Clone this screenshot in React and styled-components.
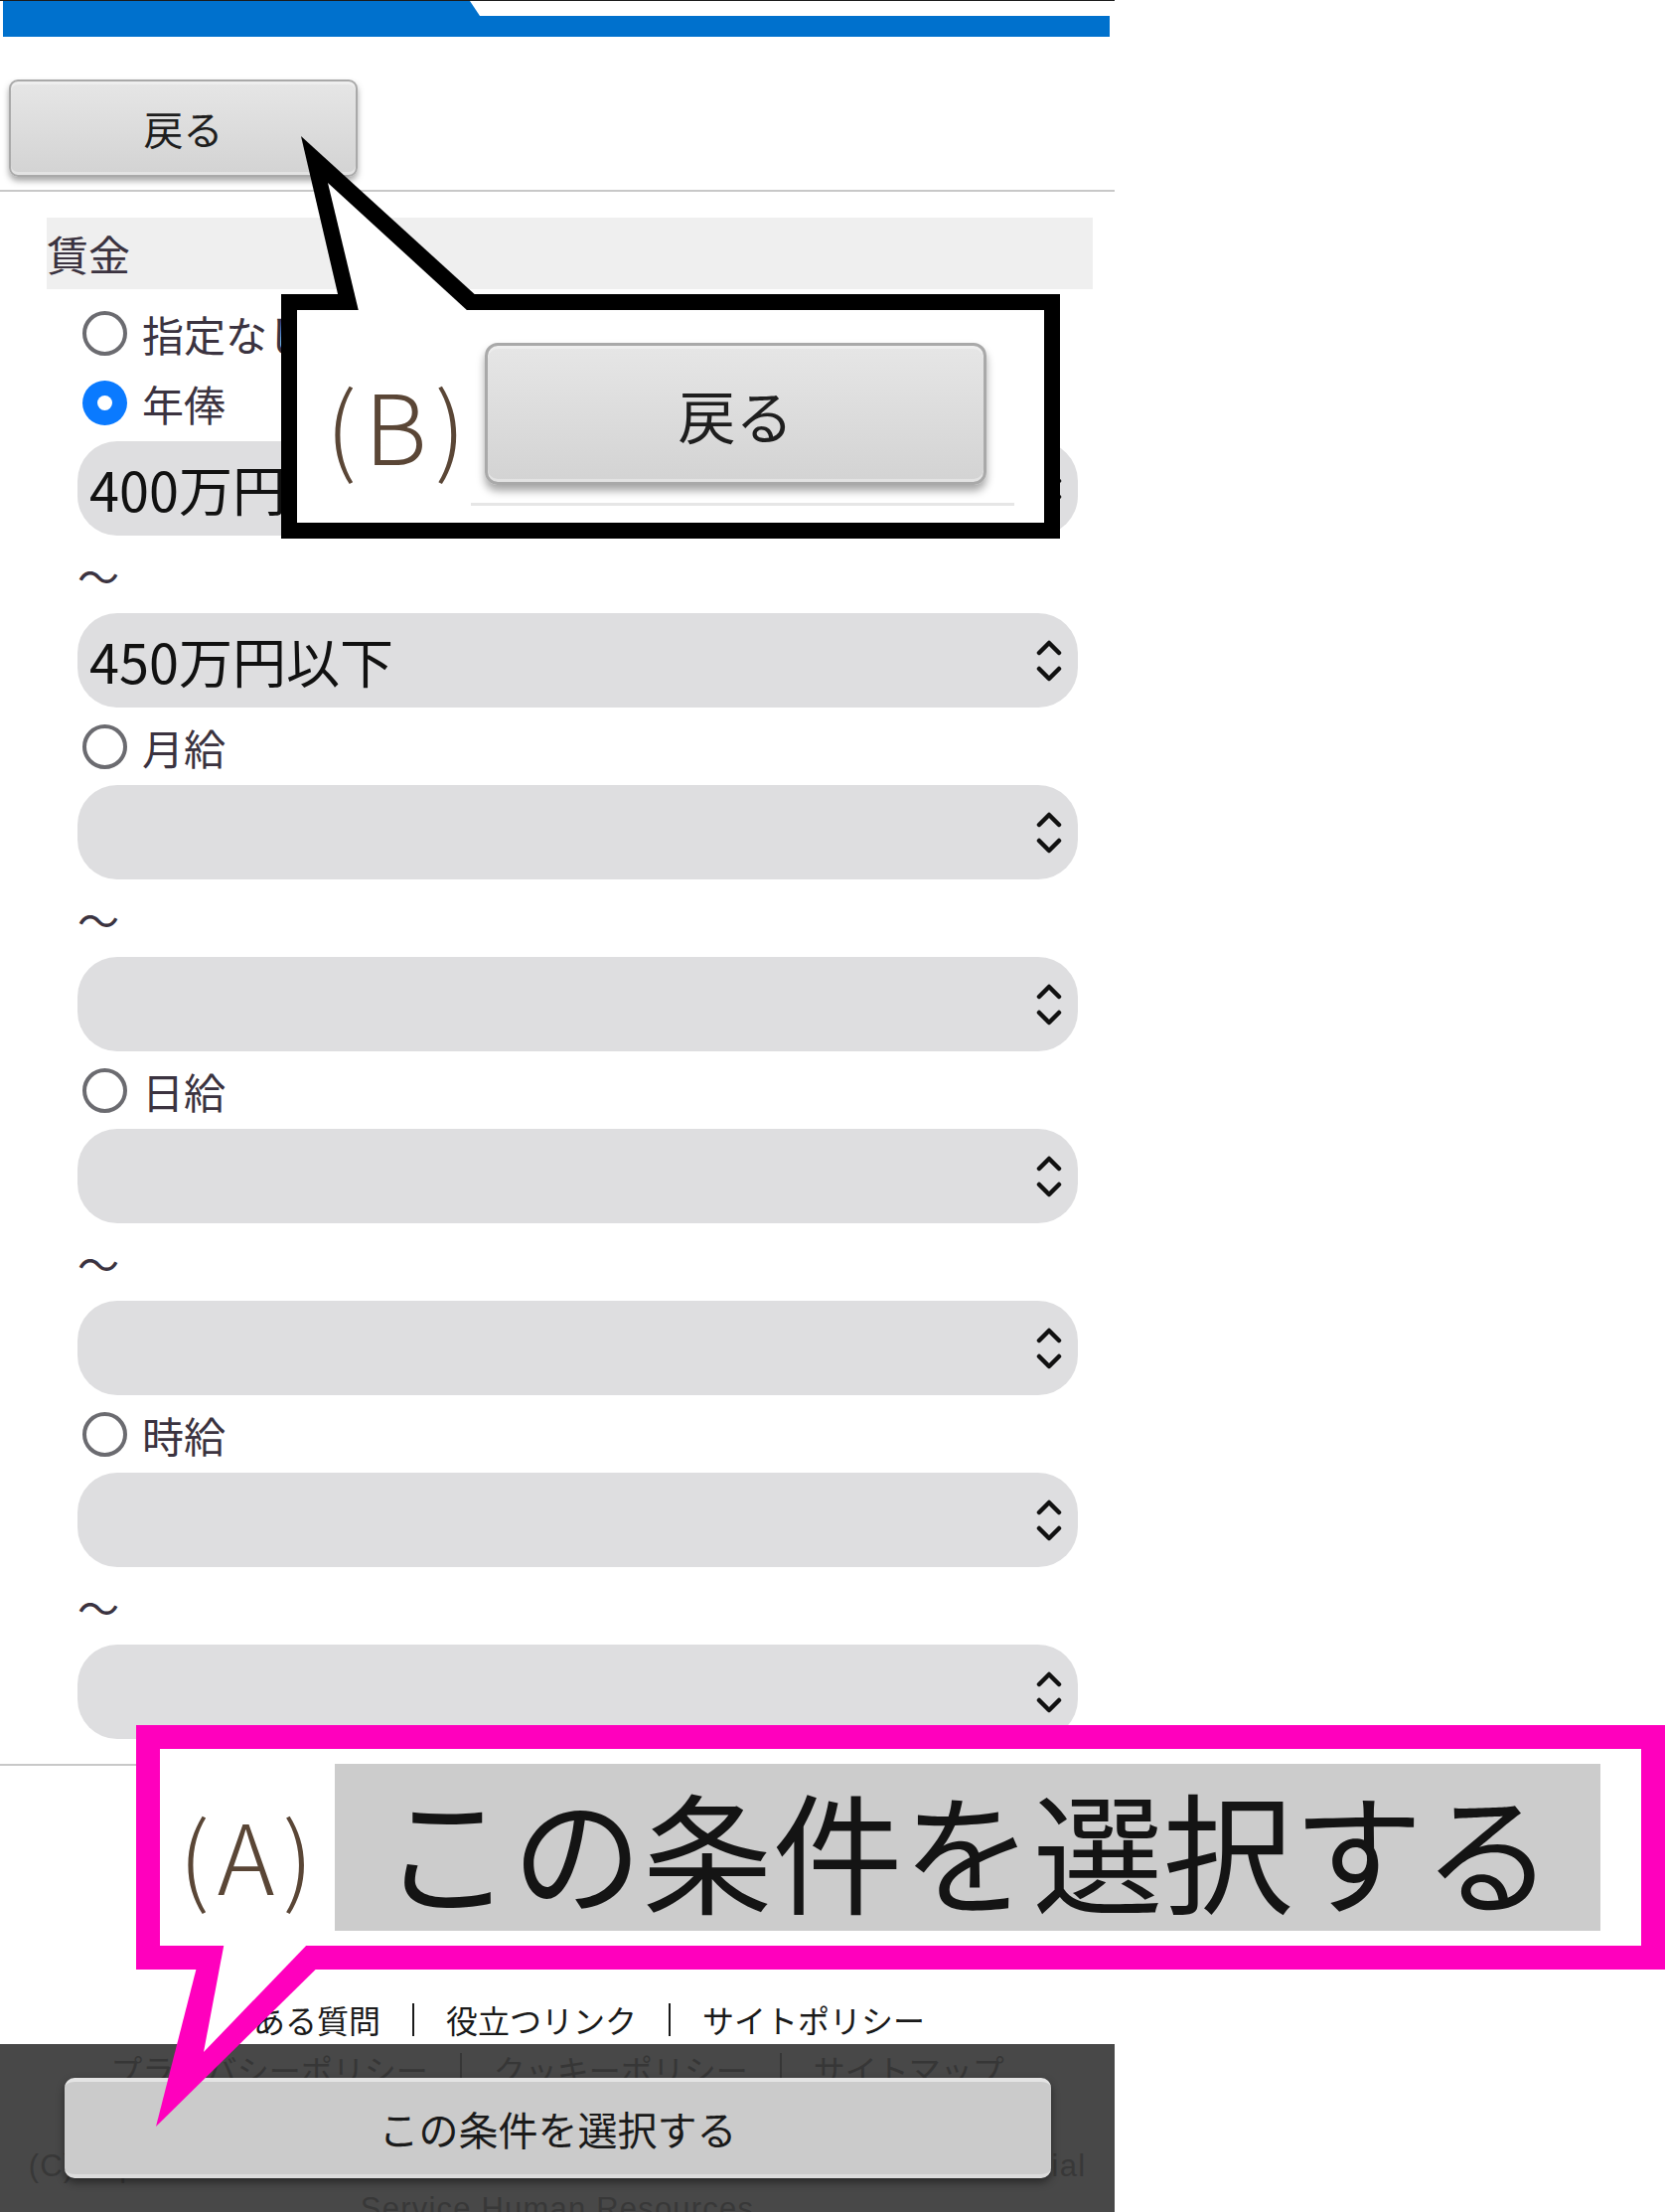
import React from "react";
import styled, { createGlobalStyle } from "styled-components";

const GlobalStyle = createGlobalStyle`
  html, body {
    margin: 0;
    padding: 0;
    background: #ffffff;
  }
  body {
    font-family: "Noto Sans CJK JP", "Noto Sans", sans-serif;
  }
`;

const JP = `"Noto Sans CJK JP", "Noto Sans", sans-serif`;

const Canvas = styled.div`
  position: relative;
  width: 1676px;
  height: 2226px;
  overflow: hidden;
  background: #ffffff;
`;

const Phone = styled.div`
  position: relative;
  width: 1122px;
  height: 2226px;
  display: flex;
  flex-direction: column;
  background: #ffffff;

  & > * {
    flex-shrink: 0;
  }
`;

const Header = styled.header`
  display: flex;
  align-items: flex-end;
  height: 36px;
  border-top: 1px solid #1b1b1b;
  padding: 0 5px 0 3px;
`;

const HeaderTab = styled.div`
  width: 480px;
  height: 100%;
  background: #0071cd;
  clip-path: polygon(0 0, 470px 0, 480px 15px, 480px 100%, 0 100%);
`;

const HeaderBar = styled.div`
  flex: 1;
  height: 21px;
  background: #0071cd;
`;

const BackRow = styled.div`
  display: flex;
  padding: 43px 0 0 9px;
`;

const GlossButton = styled.button`
  box-sizing: border-box;
  width: ${p => (p.$big ? "505px" : "351px")};
  height: ${p => (p.$big ? "143px" : "98px")};
  border: ${p => (p.$big ? "3px" : "2px")} solid #a9a9a9;
  border-radius: ${p => (p.$big ? "13px" : "9px")};
  background: linear-gradient(#e6e6e6, #d3d3d3);
  box-shadow: inset 0 3px 0 #eeeeee, inset 0 -3px 0 #e3e3e3,
    0 ${p => (p.$big ? "6px 8px" : "4px 6px")} rgba(0, 0, 0, 0.35);
  font-family: ${JP};
  font-size: ${p => (p.$big ? "58px" : "40px")};
  color: #1e1e1e;
  padding: 0;
  cursor: pointer;
`;

const Divider = styled.div`
  height: 2px;
  background: #c8c8c8;
  margin-top: ${p => p.$top || 0}px;
`;

const Section = styled.section`
  margin: 26px 22px 0 47px;
`;

const SectionTitle = styled.div`
  height: 72px;
  line-height: 72px;
  background: #efefef;
  font-size: 42px;
  color: #3b3340;
`;

const Options = styled.div`
  padding-left: 31px;
  padding-top: 1px;
  margin-top: 4px;
`;

const RadioRow = styled.label`
  display: flex;
  align-items: center;
  gap: 15px;
  height: 62px;
  margin: 8px 0;
  padding-left: 5px;
  font-size: 42px;
  color: #3b3340;
`;

const RadioMark = styled.span`
  box-sizing: border-box;
  width: 45px;
  height: 45px;
  border-radius: 50%;
  flex-shrink: 0;
  display: flex;
  align-items: center;
  justify-content: center;
  border: ${p => (p.$checked ? "none" : "4px solid #6b6b70")};
  background: ${p => (p.$checked ? "#0a7aff" : "#ffffff")};

  &::after {
    content: "";
    display: ${p => (p.$checked ? "block" : "none")};
    width: 15px;
    height: 15px;
    border-radius: 50%;
    background: #ffffff;
  }
`;

const Tilde = styled.div`
  display: flex;
  align-items: center;
  height: 62px;
  margin: 8px 0;
  font-size: 42px;
  color: #3b3340;
`;

const SelectBox = styled.div`
  box-sizing: border-box;
  display: flex;
  align-items: center;
  justify-content: space-between;
  width: 1007px;
  height: 95px;
  margin: 8px 0;
  padding: 0 15px 0 12px;
  border-radius: 40px;
  background: #dedee0;
  font-size: 54px;
  color: #111111;
`;

const Links = styled.nav`
  display: flex;
  justify-content: center;
  align-items: center;
  height: 44px;
  margin-top: 233px;
  font-size: 32px;
  color: ${p => p.$color || "#1a1a1a"};
`;

const LinkSep = styled.span`
  width: 2px;
  height: 33px;
  margin: 0 32px;
  background: currentColor;
`;

const DarkFooter = styled.footer`
  flex: 1;
  margin-top: 3px;
  padding-top: 3px;
  background: #484848;
  border-bottom-right-radius: 16px;
  border-bottom: 2px solid #111111;

  & > nav {
    margin-top: 0;
  }
`;

const Copyright = styled.div`
  margin-top: 54px;
  text-align: center;
  white-space: nowrap;
  font-family: "Liberation Sans", Arial, sans-serif;
  font-size: 31px;
  line-height: 43px;
  letter-spacing: 1.2px;
  color: #383838;
`;

const FloatingButton = styled.button`
  position: absolute;
  left: 65px;
  top: 2091px;
  width: 993px;
  height: 101px;
  box-sizing: border-box;
  border: none;
  border-top: 4px solid #e4e4e4;
  border-bottom: 4px solid #dcdcdc;
  border-radius: 10px;
  background: #cbcbcb;
  box-shadow: 0 4px 8px rgba(0, 0, 0, 0.45);
  font-family: ${JP};
  font-size: 40px;
  color: #1a1a1a;
  padding: 0;
`;

const Callout = styled.div`
  position: absolute;
  box-sizing: border-box;
  display: flex;
  align-items: ${p => (p.$pink ? "center" : "flex-start")};
  left: ${p => p.$x}px;
  top: ${p => p.$y}px;
  width: ${p => p.$w}px;
  height: 246px;
  border: ${p => (p.$pink ? "24px solid #ff00bd" : "16px solid #000000")};
  padding-left: ${p => (p.$pink ? 19 : 29)}px;
  background: #ffffff;
`;

const Mark = styled.div`
  width: ${p => p.$w}px;
  flex-shrink: 0;
  align-self: center;
  margin-top: ${p => p.$dy || 0}px;
  font-family: ${JP};
  font-weight: 300;
  font-size: 98px;
  line-height: 1;
  letter-spacing: 8px;
  color: #5a4636;
  white-space: nowrap;
`;

const ZoomColumn = styled.div`
  display: flex;
  flex-direction: column;
  align-items: flex-start;
  width: 547px;
  padding-top: 33px;
  padding-left: 14px;
  box-sizing: border-box;
`;

const ZoomRule = styled.div`
  width: 547px;
  height: 3px;
  margin: 18px 0 0 -14px;
  background: #e6e6e6;
`;

const ZoomSelect = styled.div`
  display: flex;
  align-items: center;
  justify-content: center;
  width: 1274px;
  height: 168px;
  background: #cccccc;
  font-family: ${JP};
  font-size: 131px;
  line-height: 1;
  color: #141414;
  white-space: nowrap;
`;

const Tails = styled.svg`
  position: absolute;
  left: 0;
  top: 0;
  pointer-events: none;
`;

const Chevrons = () => (
  <svg width="28" height="42" viewBox="0 0 28 42" fill="none">
    <polyline points="4,13 14,3 24,13" stroke="#111" strokeWidth="4.5" strokeLinecap="round" strokeLinejoin="round" />
    <polyline points="4,29 14,39 24,29" stroke="#111" strokeWidth="4.5" strokeLinecap="round" strokeLinejoin="round" />
  </svg>
);

const Select = ({ value }) => (
  <SelectBox>
    <span>{value}</span>
    <Chevrons />
  </SelectBox>
);

const Radio = ({ label, checked }) => (
  <RadioRow>
    <RadioMark $checked={checked} />
    {label}
  </RadioRow>
);

const RangeGroup = ({ label, from, to }) => (
  <>
    <Radio label={label} />
    <Select value={from} />
    <Tilde>～</Tilde>
    <Select value={to} />
  </>
);

const LinkLine = ({ items, color }) => (
  <Links $color={color}>
    {items.map((t, i) => (
      <React.Fragment key={t}>
        {i > 0 && <LinkSep />}
        <span>{t}</span>
      </React.Fragment>
    ))}
  </Links>
);

export default function App() {
  return (
    <Canvas>
      <GlobalStyle />
      <Phone>
        <Header>
          <HeaderTab />
          <HeaderBar />
        </Header>
        <BackRow>
          <GlossButton>戻る</GlossButton>
        </BackRow>
        <Divider $top={13} />
        <Section>
          <SectionTitle>賃金</SectionTitle>
          <Options>
            <Radio label="指定なし" />
            <Radio label="年俸" checked />
            <Select value="400万円以上" />
            <Tilde>～</Tilde>
            <Select value="450万円以下" />
            <RangeGroup label="月給" />
            <RangeGroup label="日給" />
            <RangeGroup label="時給" />
          </Options>
        </Section>
        <Divider $top={17} />
        <LinkLine items={["よくある質問", "役立つリンク", "サイトポリシー"]} />
        <DarkFooter>
          <LinkLine
            color="#363636"
            items={["プライバシーポリシー", "クッキーポリシー", "サイトマップ"]}
          />
          <Copyright>
            (C) Japan National Council of Social Welfare / Central Center for Social
            <br />
            Service Human Resources
          </Copyright>
        </DarkFooter>
        <FloatingButton>この条件を選択する</FloatingButton>
      </Phone>

      <Callout $x={283} $y={296} $w={784}>
        <Mark $w={146} $dy={12}>(B)</Mark>
        <ZoomColumn>
          <GlossButton $big>戻る</GlossButton>
          <ZoomRule />
        </ZoomColumn>
      </Callout>

      <Callout $pink $x={137} $y={1736} $w={1539}>
        <Mark $w={157} $dy={10}>(A)</Mark>
        <ZoomSelect>この条件を選択する</ZoomSelect>
      </Callout>

      <Tails width="1676" height="2226" viewBox="0 0 1676 2226">
        <polygon points="303,137 341,300 482,300" fill="#000000" />
        <polygon points="330,184 361,313 471,313" fill="#ffffff" />
        <polygon points="203,1960 157,2140 340,1960" fill="#ff00bd" />
        <polygon points="226,1954 205,2065 312,1954" fill="#ffffff" />
      </Tails>
    </Canvas>
  );
}
